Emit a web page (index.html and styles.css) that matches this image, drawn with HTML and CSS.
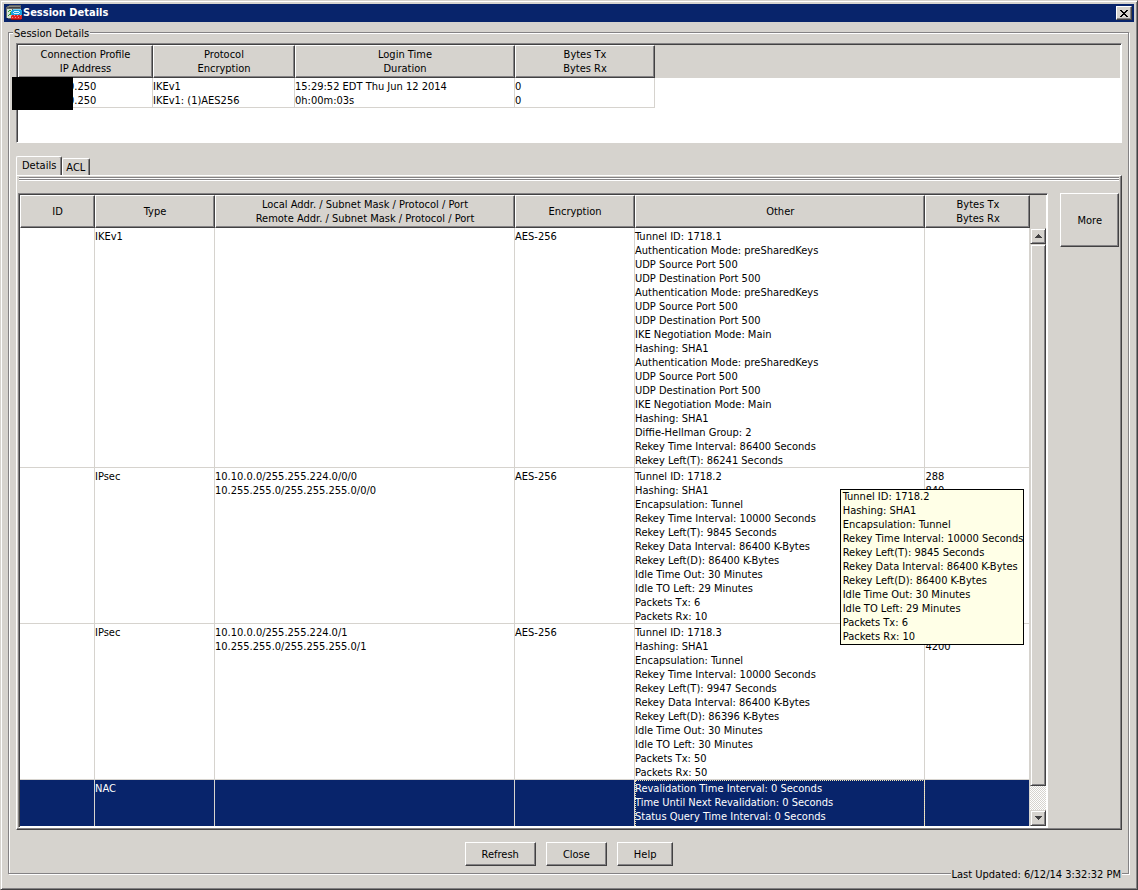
FILE: index.html
```
<!DOCTYPE html>
<html lang="en">
<head>
<meta charset="utf-8">
<title>Session Details</title>
<link rel="stylesheet" href="styles.css">
</head>
<body>
<div class="window">
  <header class="titlebar">
    <svg class="app-icon" viewBox="0 0 16 16" width="16" height="16" shape-rendering="crispEdges" aria-hidden="true">
      <path d="M1 1h2V0h12v5h-1v9H2v-1H0V2h1z" fill="#636563"/>
      <path d="M2 1h12v1H2z" fill="#848684"/>
      <path d="M3 2h11v1H3z" fill="#424142"/>
      <path d="M1 4h5v9H1z" fill="#d6e3d6"/>
      <path d="M3 5h2v1H3zM2 6h1v1H2zM4 7h1v2H4zM3 9h2v1H3zM2 10h1v1H2z" fill="#31a231"/>
      <path d="M7 4h8v1h1v5H5V6h1V5h1z" fill="#18a2de"/>
      <path d="M7 4h8v1H7z" fill="#7bd3f7"/>
      <path d="M8 6h5v1H8zM7 7h1v1H7zM13 7h1v1h-1zM8 8h5v1H8z" fill="#d6f3ff"/>
      <path d="M5 10h11v4h-1v1H5z" fill="#de2421"/>
      <path d="M5 10h1v1H5zM8 10h1v1H8zM11 10h1v1h-1zM14 10h1v1h-1zM6 12h1v1H6zM9 12h1v1H9zM12 12h1v1h-1z" fill="#ff8e84"/>
      <path d="M5 14h10v1H5z" fill="#8c1010"/>
    </svg>
    <h1 class="title">Session Details</h1>
    <button class="close" type="button" aria-label="Close window">
      <svg viewBox="0 0 8 7" width="8" height="7" shape-rendering="crispEdges" aria-hidden="true">
        <path d="M0 0h2v1h1v1h2V1h1V0h2v1H7v1H6v1H5v1h1v1h1v1h1v1H6V6H5V5H3v1H2v1H0V6h1V5h1V4h1V3H2V2H1V1H0z" fill="#000"/>
      </svg>
    </button>
  </header>

  <main class="group">
    <h2 class="group-title">Session Details</h2>

    <section class="pane summary">
      <div class="summary-head"></div>
      <table class="grid summary-grid">
        <colgroup><col class="w-profile"><col class="w-protocol"><col class="w-login"><col class="w-total"></colgroup>
        <thead>
          <tr>
            <th scope="col">Connection Profile<br>IP Address</th>
            <th scope="col">Protocol<br>Encryption</th>
            <th scope="col">Login Time<br>Duration</th>
            <th scope="col">Bytes Tx<br>Bytes Rx</th>
          </tr>
        </thead>
        <tbody>
          <tr>
            <td class="masked">0.250<br>0.250</td>
            <td>IKEv1<br>IKEv1: (1)AES256</td>
            <td>15:29:52 EDT Thu Jun 12 2014<br>0h:00m:03s</td>
            <td>0<br>0</td>
          </tr>
        </tbody>
      </table>
    </section>

    <div class="tabs" role="tablist">
      <button class="tab active" type="button" role="tab" aria-selected="true">Details</button>
      <button class="tab" type="button" role="tab" aria-selected="false">ACL</button>
    </div>

    <section class="tab-panel" role="tabpanel">
      <div class="rule"></div>
      <div class="panel-body">
        <div class="pane details">
          <div class="details-view">
            <table class="grid details-grid">
              <colgroup><col class="w-id"><col class="w-type"><col class="w-addr"><col class="w-enc"><col><col class="w-bytes"></colgroup>
              <thead>
                <tr>
                  <th scope="col">ID</th>
                  <th scope="col">Type</th>
                  <th scope="col">Local Addr. / Subnet Mask / Protocol / Port<br>Remote Addr. / Subnet Mask / Protocol / Port</th>
                  <th scope="col">Encryption</th>
                  <th scope="col">Other</th>
                  <th scope="col">Bytes Tx<br>Bytes Rx</th>
                </tr>
              </thead>
              <tbody>
                <tr>
                  <td></td>
                  <td>IKEv1</td>
                  <td></td>
                  <td>AES-256</td>
                  <td>Tunnel ID: 1718.1<br>Authentication Mode: preSharedKeys<br>UDP Source Port 500<br>UDP Destination Port 500<br>Authentication Mode: preSharedKeys<br>UDP Source Port 500<br>UDP Destination Port 500<br>IKE Negotiation Mode: Main<br>Hashing: SHA1<br>Authentication Mode: preSharedKeys<br>UDP Source Port 500<br>UDP Destination Port 500<br>IKE Negotiation Mode: Main<br>Hashing: SHA1<br>Diffie-Hellman Group: 2<br>Rekey Time Interval: 86400 Seconds<br>Rekey Left(T): 86241 Seconds</td>
                  <td></td>
                </tr>
                <tr>
                  <td></td>
                  <td>IPsec</td>
                  <td>10.10.0.0/255.255.224.0/0/0<br>10.255.255.0/255.255.255.0/0/0</td>
                  <td>AES-256</td>
                  <td>Tunnel ID: 1718.2<br>Hashing: SHA1<br>Encapsulation: Tunnel<br>Rekey Time Interval: 10000 Seconds<br>Rekey Left(T): 9845 Seconds<br>Rekey Data Interval: 86400 K-Bytes<br>Rekey Left(D): 86400 K-Bytes<br>Idle Time Out: 30 Minutes<br>Idle TO Left: 29 Minutes<br>Packets Tx: 6<br>Packets Rx: 10</td>
                  <td class="tip-anchor">288<br>840
                    <div class="tooltip" role="tooltip">Tunnel ID: 1718.2<br>Hashing: SHA1<br>Encapsulation: Tunnel<br>Rekey Time Interval: 10000 Seconds<br>Rekey Left(T): 9845 Seconds<br>Rekey Data Interval: 86400 K-Bytes<br>Rekey Left(D): 86400 K-Bytes<br>Idle Time Out: 30 Minutes<br>Idle TO Left: 29 Minutes<br>Packets Tx: 6<br>Packets Rx: 10</div>
                  </td>
                </tr>
                <tr>
                  <td></td>
                  <td>IPsec</td>
                  <td>10.10.0.0/255.255.224.0/1<br>10.255.255.0/255.255.255.0/1</td>
                  <td>AES-256</td>
                  <td>Tunnel ID: 1718.3<br>Hashing: SHA1<br>Encapsulation: Tunnel<br>Rekey Time Interval: 10000 Seconds<br>Rekey Left(T): 9947 Seconds<br>Rekey Data Interval: 86400 K-Bytes<br>Rekey Left(D): 86396 K-Bytes<br>Idle Time Out: 30 Minutes<br>Idle TO Left: 30 Minutes<br>Packets Tx: 50<br>Packets Rx: 50</td>
                  <td><br>4200</td>
                </tr>
                <tr class="selected">
                  <td></td>
                  <td>NAC</td>
                  <td></td>
                  <td></td>
                  <td class="focused">Revalidation Time Interval: 0 Seconds<br>Time Until Next Revalidation: 0 Seconds<br>Status Query Time Interval: 0 Seconds</td>
                  <td></td>
                </tr>
              </tbody>
            </table>
          </div>
          <div class="scroll-column">
            <div class="scroll-corner"></div>
            <div class="scrollbar">
              <button class="scroll-button" type="button" aria-label="Scroll up"><svg viewBox="0 0 7 4" width="7" height="4" shape-rendering="crispEdges"><path d="M3 0h1v1h1v1h1v1h1v1H0V3h1V2h1V1h1z" fill="#424142"/></svg></button>
              <div class="thumb"></div>
              <div class="track"></div>
              <button class="scroll-button" type="button" aria-label="Scroll down"><svg viewBox="0 0 7 4" width="7" height="4" shape-rendering="crispEdges"><path d="M0 0h7v1H6v1H5v1H4v1H3V3H2V2H1V1H0z" fill="#424142"/></svg></button>
            </div>
          </div>
        </div>
        <button class="button more" type="button">More</button>
      </div>
    </section>

    <div class="actions">
      <button class="button" type="button">Refresh</button>
      <button class="button" type="button">Close</button>
      <button class="button" type="button">Help</button>
    </div>
    <p class="updated">Last Updated: 6/12/14 3:32:32 PM</p>
  </main>
</div>
</body>
</html>
```
FILE: styles.css
```
* { box-sizing: border-box; }

:root {
  --face: #d6d3ce;
  --light: #fff;
  --shade: #848284;
  --dark: #424142;
  --navy: #08246b;
}

body {
  margin: 0;
  background: var(--face);
  color: #000;
  font-family: "DejaVu Sans Condensed", "DejaVu Sans", sans-serif;
  font-size: 11px;
  line-height: 14px;
}

button {
  font: inherit;
  color: inherit;
  padding: 0;
  margin: 0;
  border: 0;
  border-radius: 0;
  background: var(--face);
}

.window {
  display: flex;
  flex-direction: column;
  height: 100vh;
  min-height: 500px;
  padding: 3px;
  border: 1px solid;
  border-color: var(--face) var(--dark) var(--dark) var(--face);
  box-shadow: inset 1px 1px 0 var(--light), inset -1px -1px 0 var(--shade);
}

.titlebar {
  display: flex;
  align-items: center;
  gap: 1px;
  height: 18px;
  flex: none;
  padding: 0 2px;
  background: var(--navy);
  color: #fff;
}

.title {
  flex: 1;
  margin: 0;
  font-size: 11px;
  font-weight: bold;
}

.close {
  display: flex;
  align-items: center;
  justify-content: center;
  width: 16px;
  height: 14px;
  border: 1px solid;
  border-color: var(--light) var(--dark) var(--dark) var(--light);
  box-shadow: inset -1px -1px 0 var(--shade);
}

.group {
  position: relative;
  display: flex;
  flex-direction: column;
  flex: 1;
  min-height: 0;
  margin: 10px 5px 12px 4px;
  padding: 10px 6px 7px 7px;
  border: 1px solid var(--shade);
  box-shadow: inset 1px 1px 0 var(--light), 1px 1px 0 var(--light);
}

.group-title,
.updated {
  position: absolute;
  margin: 0;
  background: var(--face);
  font-size: 11px;
  font-weight: normal;
}

.group-title { top: -6px; left: 4px; padding: 0 1px; }
.updated { right: 6px; bottom: -9px; padding: 0 1px; }

.pane {
  padding: 1px;
  border: 1px solid;
  border-color: var(--shade) var(--light) var(--light) var(--shade);
  box-shadow: inset 1px 1px 0 var(--dark);
  background: #fff;
}

.summary {
  display: grid;
  flex: none;
  height: 100px;
  grid-template-rows: 33px 1fr;
}

.summary-head {
  grid-area: 1 / 1;
  background: var(--face);
}

.summary-grid { grid-area: 1 / 1 / span 2; align-self: start; width: 637px; }

.grid {
  border-collapse: separate;
  border-spacing: 0;
  table-layout: fixed;
}

.grid th {
  height: 33px;
  padding: 0;
  border: 1px solid;
  border-color: var(--light) var(--dark) var(--dark) var(--light);
  box-shadow: inset -1px -1px 0 var(--shade);
  background: var(--face);
  font-weight: normal;
}

.grid td {
  padding: 2px 0 0;
  border-right: 1px solid var(--face);
  box-shadow: inset 0 -1px 0 var(--face);
  vertical-align: top;
  white-space: nowrap;
}

.w-profile { width: 135px; }
.w-protocol { width: 142px; }
.w-login { width: 220px; }
.w-total { width: 140px; }

.grid .masked { position: relative; padding-left: 50px; }

.masked::before {
  content: "";
  position: absolute;
  top: -1px;
  left: -6px;
  width: 61px;
  height: 33px;
  background: #000;
}

.tabs {
  display: flex;
  align-items: flex-end;
  flex: none;
  height: 32px;
}

.tab {
  height: 17px;
  padding: 2px 4px 0 3px;
  border: solid;
  border-width: 1px 1px 0;
  border-color: var(--light) var(--dark) var(--dark) var(--light);
  border-radius: 2px 2px 0 0;
  box-shadow: inset -1px 0 0 var(--shade);
}

.tab.active {
  height: 19px;
  padding: 0 5px 0 5px;
}

.tab-panel {
  display: flex;
  flex-direction: column;
  flex: 1;
  min-height: 0;
  padding: 1px 2px 1px 1px;
  border: 1px solid;
  border-color: var(--light) var(--dark) var(--dark) var(--light);
  box-shadow: inset -1px -1px 0 var(--shade);
}

.rule {
  flex: none;
  height: 4px;
  margin-left: 1px;
  background: repeating-linear-gradient(var(--shade) 0 1px, var(--light) 1px 2px);
}

.panel-body {
  display: flex;
  align-items: flex-start;
  gap: 12px;
  flex: 1;
  min-height: 0;
  margin-top: 12px;
}

.details {
  display: flex;
  flex: 1;
  align-self: stretch;
  min-width: 0;
}

.details-view {
  flex: 1;
  min-width: 0;
  overflow: clip;
}

.details-view { overflow-x: visible; }

.details-grid { width: 100%; }

.w-id { width: 75px; }
.w-type, .w-enc { width: 120px; }
.w-addr { width: 300px; }
.w-bytes { width: 105px; }

.selected td {
  height: 60px;
  background: var(--navy);
  background-clip: padding-box;
  color: #fff;
}

.grid .focused {
  outline: 1px dotted #f7e7b5;
  outline-offset: -1px;
}

.scroll-column {
  display: flex;
  flex-direction: column;
  width: 16px;
  background: var(--face);
}

.scroll-corner { flex: none; height: 33px; }

.scrollbar {
  display: flex;
  flex-direction: column;
  flex: 1;
  min-height: 0;
}

.scroll-button,
.thumb {
  border: 1px solid;
  border-color: var(--face) var(--dark) var(--dark) var(--face);
  box-shadow: inset 1px 1px 0 var(--light), inset -1px -1px 0 var(--shade);
}

.scroll-button {
  display: flex;
  align-items: center;
  justify-content: center;
  flex: none;
  height: 16px;
}

.thumb { flex: 542; }

.track {
  flex: 24;
  background: repeating-conic-gradient(var(--light) 0 25%, var(--face) 0 50%) 0 0 / 2px 2px;
}

.button {
  height: 24px;
  padding: 1px 16px 0;
  border: 1px solid;
  border-color: var(--light) var(--dark) var(--dark) var(--light);
  box-shadow: inset -1px -1px 0 var(--shade);
}

.more { height: 54px; }

.actions {
  display: flex;
  justify-content: center;
  gap: 10px;
  flex: none;
  padding-top: 12px;
}

.tip-anchor { position: relative; }

.tooltip {
  position: absolute;
  z-index: 1;
  top: 21px;
  right: 5px;
  padding: 0 0 0 2px;
  border: 1px solid #000;
  background: #ffffe7;
}
```
